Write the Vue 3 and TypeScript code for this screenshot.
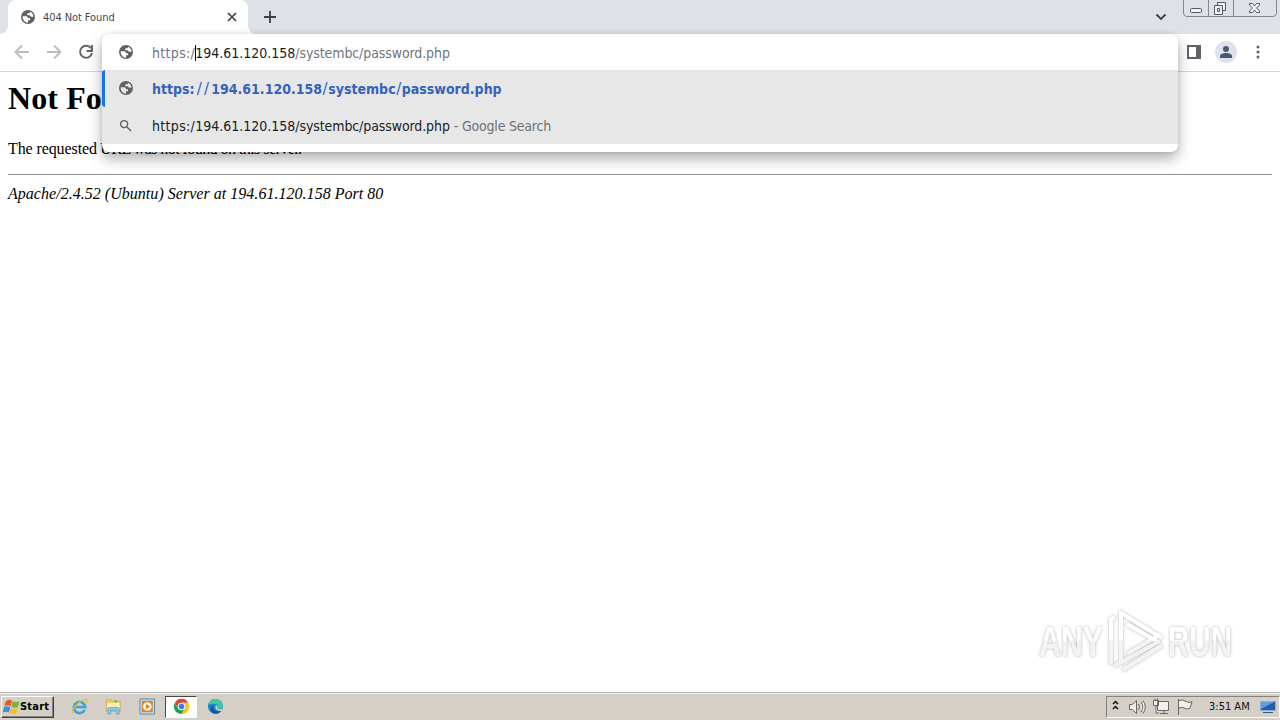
<script setup lang="ts">
const host = '194.61.120.158'
const path = '/systembc/password.php'
const globe = 'M12 1.500a10.500 10.500 0 1 0 0 21 10.500 10.500 0 1 0 0-21zM4 11h5c2 0 3 1 3 3h3v3h-3v3.500C7 20.500 4 16 4 11zM15 4c3 1.200 5.200 4 5.300 7.500H17c-1 0-2-.7-2-2h-4V6.500h2.500c1 0 1.500-1 1.500-2.500z'
</script>

<template>
  <div class="screen">
    <header class="tabs">
      <div class="tab">
        <svg class="globe" viewBox="0 0 24 24"><path :d="globe" /></svg>
        <span class="title">404 Not Found</span>
        <svg class="close" viewBox="0 0 10 10"><path d="M1 1l8 8M9 1L1 9" /></svg>
      </div>
      <svg class="plus" viewBox="0 0 12 12"><path d="M6 0v12M0 6h12" /></svg>
      <svg class="chevron" viewBox="0 0 12 8"><path d="M1.500 1.500L6 6l4.500-4.500" /></svg>
      <svg class="winbtns" viewBox="0 0 97 18">
        <path class="frame" d="M.5 0v13q0 3.500 3.500 3.500h86q3.500 0 3.500-3.500V0M25.500 0v16M50.500 0v16" />
        <rect class="glyph" x="7.500" y="8.500" width="11" height="4" rx="1" />
        <path class="glyph" d="M34.500 5.500v-3h8v8h-3M31.500 5.500h8v9h-8zM34.500 8.500h2v3h-2z" />
        <path class="glyph" d="M66.500 3.500h3l2 2.500 2-2.500h3v1.500l-3 3 3 3v1.500h-3l-2-2.500-2 2.500h-3V11l3-3-3-3z" />
      </svg>
    </header>

    <nav class="toolbar">
      <svg class="nav off" viewBox="0 0 16 16"><path d="M15 8H2M8 1.500L1.500 8 8 14.500" /></svg>
      <svg class="nav off" viewBox="0 0 16 16"><path d="M1 8h13M8 1.500L14.500 8 8 14.500" /></svg>
      <svg class="nav" viewBox="0 0 16 16"><path d="M13 4.300A6 6 0 1 0 14 9M14 1v6H8.500" /></svg>
      <span class="grow"></span>
      <svg class="panel" viewBox="0 0 14 14"><path d="M0 0h14v14H0zM2 2v10h7V2z" /></svg>
      <span class="avatar"><svg viewBox="0 0 12 12"><circle cx="6" cy="3" r="3" /><path d="M0 12V10c0-4 12-4 12 0v2z" /></svg></span>
      <svg class="dots" viewBox="0 0 4 14"><circle cx="2" cy="2" r="1.500" /><circle cx="2" cy="7" r="1.500" /><circle cx="2" cy="12" r="1.500" /></svg>
    </nav>

    <main class="page">
      <h1>Not Found</h1>
      <p>The requested<span> URL was not found on this server.</span></p>
      <hr />
      <address>Apache/2.4.52 (Ubuntu) Server at 194.61.120.158 Port 80</address>
    </main>

    <section class="omnibox">
      <div class="row input">
        <svg class="globe" viewBox="0 0 24 24"><path :d="globe" /></svg>
        <span class="url"><span class="scheme">https:/</span><i class="caret"></i><b>{{ host }}</b><span class="path">{{ path }}</span></span>
      </div>
      <div class="row match">
        <svg class="globe" viewBox="0 0 24 24"><path :d="globe" /></svg>
        <span class="url strong">https:<em class="double">//</em>{{ host }}<em>/</em>systembc<em>/</em>password.php</span>
      </div>
      <div class="row search">
        <svg class="globe lens" viewBox="0 0 14 14"><circle cx="5.500" cy="5.500" r="3.800" /><path d="M8.300 8.300L13 13" /></svg>
        <span class="url"><span class="scheme">https:/</span>{{ host }}<span class="path">{{ path }}</span></span><span class="hint">- Google Search</span>
      </div>
    </section>

    <svg class="watermark" viewBox="0 0 210 74">
      <defs>
        <linearGradient id="fade" gradientUnits="userSpaceOnUse" x1="0" y1="0" x2="0" y2="74">
          <stop offset=".5" stop-color="#fff" /><stop offset=".52" stop-color="#f3f3f3" />
        </linearGradient>
      </defs>
      <text x="9" y="53" textLength="64" lengthAdjust="spacingAndGlyphs">ANY</text>
      <text x="138" y="53" textLength="64" lengthAdjust="spacingAndGlyphs">RUN</text>
      <path class="mark" d="M85 14l-4 2v45M91 58V10l41 25M97 21l31 18M97 51l32-19M84 63l46-25M93 67l39-25" />
    </svg>

    <footer class="taskbar">
      <div class="start">
        <svg viewBox="0 0 18 16">
          <path fill="#e75a24" d="M3 2q3-3 6.500-.8L8 7.200Q5 5.200 1.300 7.500z" />
          <path fill="#72b743" d="M10.300 1.700q3 2 7.200.3L15.800 8q-3.500 1.800-7-.3z" />
          <path fill="#3b8fd8" d="M1.100 8.300q3-2 6.700-.1L6.300 13.800Q3 12 -.4 14z" />
          <path fill="#f7bd25" d="M8.600 8.800q3.500 2 7 .3L14 15q-3.500 1.600-7-.7z" />
        </svg>
        <span>Start</span>
      </div>
      <div class="apps">
        <span class="app"><svg viewBox="0 0 18 18">
          <path fill="none" stroke="#3aa4dd" stroke-width="2.800" d="M14.500 12.500A6 6 0 1 1 15 9.500H4" />
          <path fill="none" stroke="#e9b93b" stroke-width="1.500" d="M2 16C-2 14 12-1 16.500 2q1 .8-.5 3" />
        </svg></span>
        <span class="app"><svg viewBox="0 0 18 18">
          <path fill="#f2cf68" stroke="#c79e42" stroke-width=".7" d="M1.500 2h5l1 1.500h8.500V14h-14.500z" />
          <path fill="#fff2ae" d="M2 5.500h13.500V10H2z" /><path fill="#64b75c" d="M10 2.500h3v2h-3z" />
          <path fill="#8dc9e8" stroke="#4c98c3" stroke-width=".7" d="M3 17v-5q0-2 2-2h8q2 0 2 2v5h-3v-4H6v4z" />
        </svg></span>
        <span class="app"><svg viewBox="0 0 18 18">
          <path fill="#b9d9f1" stroke="#5089b8" d="M1 1h15.500v16H1z" /><path fill="#ef7f13" d="M3 3h11.500v12H3z" />
          <circle cx="8.800" cy="9" r="4.600" fill="#fff" /><path fill="#ef7f13" d="M7.200 6l4.800 3-4.800 3z" />
        </svg></span>
        <span class="app active"><svg viewBox="0 0 18 18">
          <path fill="#e6412f" d="M2 5a8 8 0 0 1 14.200 0H9l-3.500 6z" />
          <path fill="#fbc417" d="M16.200 5A8 8 0 0 1 9 17l3.500-6L9 5z" />
          <path fill="#25a252" d="M2 5a8 8 0 0 0 7 12l3.500-6h-7z" />
          <circle cx="9" cy="9" r="4" fill="#fff" /><circle cx="9" cy="9" r="3" fill="#3b7de8" />
        </svg></span>
        <span class="app"><svg viewBox="0 0 18 18">
          <circle cx="9" cy="9" r="8" fill="#1785cf" /><path fill="#41c5a4" d="M1.200 7C3-1 16-1 17 8c0 4-4 4-6 3 2-5-4-6-9.800-4z" />
          <path fill="#14579f" d="M7 7c-2 4 1 8 8 7-6 6-13 0-11-4z" /><path fill="#d5d2ca" d="M9 8q3 0 2 3 2 2 6 0l-2 3Q8 14 9 8z" />
        </svg></span>
      </div>
      <div class="tray">
        <svg class="tray-icons" viewBox="0 0 92 20">
          <path class="arrows" d="M6 7l2.500-2.500L11 7M6 12l2.500-2.500L11 12" />
          <path class="line" d="M22.500 7.500h3l4-4v13l-4-4h-3zM31.500 7q2 3 0 6M34 5q3.500 5 0 10M36 3.500q4.500 6.500 0 13" />
          <path class="line" d="M50.500 4.500h11v9h-11zM53 16.500h8M57 14v2M46.500 3.500v5h5v-5h-5M48 1.500v2M50.500 1.500v2M49 9v7h3" />
          <path class="line" d="M71.500 2v16M72 3.500q4-1.500 7 1 3 2 6 0l-2 7q-4 1-6-.5-2-1.500-5 0" />
        </svg>
        <span class="time">3:51 AM</span>
        <svg class="desk" viewBox="0 0 16 14"><path fill="#235cad" stroke="#8dacd1" d="M.5 1.500h15v9H.5z" /><path fill="#5ca1e4" d="M1 2h13L1 9z" /><path fill="#315884" d="M3 12h10v1H3z" /></svg>
      </div>
    </footer>
  </div>
</template>

<style>
body { margin: 0; overflow: hidden; }
</style>

<style scoped>
.screen { position: relative; width: 1280px; height: 720px; display: flex; flex-direction: column; overflow: hidden; background: #fff; font-family: "DejaVu Sans Condensed", "DejaVu Sans", sans-serif; box-sizing: border-box; }
.tabs { height: 34px; flex: none; display: flex; background: #dee1e6; }
.tab { position: relative; width: 240px; height: 34px; margin-left: 8px; box-sizing: border-box; padding: 0 11px 0 12px; display: flex; align-items: center; background: #fff; border-radius: 8px 8px 0 0; }
.tab::before, .tab::after { content: ""; position: absolute; bottom: 0; width: 8px; height: 8px; }
.tab::before { left: -8px; background: radial-gradient(circle at 0 0, transparent 7.500px, #fff 8px); }
.tab::after { right: -8px; background: radial-gradient(circle at 100% 0, transparent 7.500px, #fff 8px); }
.globe { width: 16px; height: 16px; flex: none; fill: #5f6368; fill-rule: evenodd; }
.title { margin-left: 7px; font-size: 11px; letter-spacing: -.08px; color: #45484d; flex: 1; }
.close { width: 10px; height: 10px; stroke: #3c4043; stroke-width: 1.700; }
.plus { width: 12px; height: 12px; margin: 11px 0 0 16px; stroke: #3c4043; stroke-width: 1.800; }
.chevron { width: 12px; height: 8px; margin: 13px 0 0 auto; fill: none; stroke: #3c4043; stroke-width: 1.800; }
.winbtns { width: 97px; height: 18px; margin-left: 16px; fill: none; }
.frame { stroke: #84878c; }
.glyph { stroke: #555b66; fill: #f4f5f7; fill-rule: evenodd; }
.toolbar { height: 37px; flex: none; display: flex; align-items: center; padding: 0 20px 0 14px; border-bottom: 1px solid #d5d6d8; }
.toolbar > * { position: relative; top: -.5px; }
.nav { width: 16px; height: 16px; margin-right: 16px; fill: none; stroke: #5f6368; stroke-width: 1.900; }
.nav.off { stroke: #babcbe; }
.grow { flex: 1; }
.panel { width: 14px; height: 14px; fill: #5f6368; fill-rule: evenodd; }
.avatar { width: 22px; height: 22px; margin-left: 14px; border-radius: 50%; background: #dfe2e8; display: grid; place-items: center; }
.avatar svg { width: 12px; height: 12px; fill: #4a5878; }
.dots { width: 4px; height: 14px; margin-left: 19px; fill: #5f6368; }
.page { flex: 1; padding: 0 8px; font-family: "Liberation Serif", serif; color: #000; }
h1 { margin: 8px 0 0; font-size: 32px; line-height: 37px; letter-spacing: .1px; }
p { margin: 22px 0 0; font-size: 16px; line-height: 19px; letter-spacing: -.1px; }
p span { letter-spacing: -.55px; }
hr { margin: 16px 0 9px; border: 0; height: 1px; background: #929292; }
address { font-size: 16px; line-height: 20px; letter-spacing: .03px; }
.omnibox { position: absolute; left: 102px; top: 34px; width: 1076px; height: 118px; border-radius: 7px; background: #fff; box-shadow: 0 7px 14px rgba(0, 0, 0, .3), 0 0 5px rgba(0, 0, 0, .1); }
.row { display: flex; align-items: center; height: 37px; padding-left: 16px; box-sizing: border-box; background: #e7e7e7; }
.row.input { height: 36px; background: transparent; }
.row.input .url { top: 1px; }
.match { border-left: 3px solid #1a73e8; border-radius: 3px 0 0 3px; padding-left: 13px; }
.match .globe { position: relative; top: -1px; }
.url { margin-left: 18px; font-size: 14px; line-height: 18px; white-space: pre; color: #202124; position: relative; }
.scheme { letter-spacing: .32px; }
.path { letter-spacing: -.1px; }
.input .url { color: #70757a; }
.url b { font-weight: 400; color: #202124; }
.caret { display: inline-block; width: 1px; height: 16px; margin-right: -1px; vertical-align: -3px; background: #000; }
.strong { font-weight: 700; color: #3463bd; }
.strong em { display: inline-block; width: 6.200px; text-align: center; font-style: normal; font-weight: 400; font-family: "DejaVu Sans", sans-serif; font-size: 15px; }
.strong .double { width: 16.700px; letter-spacing: 2px; text-indent: 2px; }
.row .lens { width: 13px; height: 13px; margin: -1px 2px 0 1px; fill: none; stroke: #5f6368; stroke-width: 1.500; }
.hint { margin-left: 4px; font-size: 14px; letter-spacing: -.2px; color: #6e7175; white-space: pre; }
.watermark { position: absolute; left: 1030px; top: 603px; width: 210px; height: 74px; overflow: visible; filter: drop-shadow(0 0 1.500px rgba(0, 0, 0, .3)); }
.watermark text { font-family: "Liberation Sans Narrow", "Liberation Sans", sans-serif; font-size: 42px; font-weight: 700; fill: url(#fade); }
.mark { fill: none; stroke: url(#fade); stroke-width: 4; }
.taskbar { height: 28px; flex: none; box-sizing: border-box; display: flex; align-items: center; background: #d4d0c8; border-top: 1px solid #b6b4b0; box-shadow: inset 0 1px #f6f5f2; }
.start { height: 22px; width: 53px; margin-left: 1px; box-sizing: border-box; display: flex; align-items: center; border: 1px solid; border-color: #fff #404040 #404040 #fff; box-shadow: inset -1px -1px #85827d; padding-left: 1px; color: #000; font-size: 11px; font-weight: 700; }
.start svg { width: 17px; height: 16px; flex: none; }
.start span { letter-spacing: .2px; }
.apps { display: flex; gap: 2px; margin-left: 9px; }
.app { width: 32px; height: 22px; box-sizing: border-box; display: grid; place-items: center; border: 1px solid transparent; }
.app svg { width: 17px; height: 17px; }
.app.active { background: #fff; border-color: #484641 #fff #fff #484641; }
.tray { width: 174px; height: 22px; margin-left: auto; box-sizing: border-box; display: flex; align-items: center; border: 1px solid; border-color: #85827d #fff #fff #85827d; }
.tray-icons { width: 92px; height: 20px; fill: none; }
.arrows { stroke: #111; stroke-width: 1.500; }
.line { stroke: #696865; fill: #f1f0ed; }
.time { font-size: 11px; margin-left: 10px; color: #111; white-space: nowrap; }
.desk { width: 16px; height: 14px; margin-left: auto; margin-right: 3px; }
</style>
